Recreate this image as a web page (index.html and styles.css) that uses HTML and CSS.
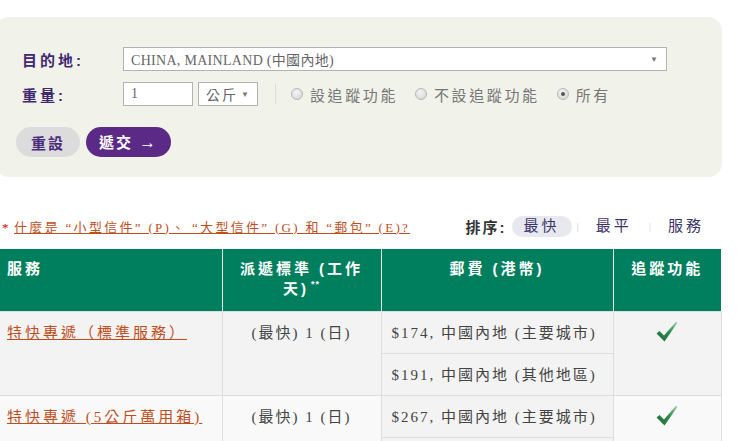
FILE: index.html
```html
<!DOCTYPE html>
<html lang="zh-Hant">
<head>
    <meta charset="UTF-8">
    <meta name="viewport" content="width=device-width, initial-scale=1.0">
    <title>郵費計算</title>
    <link rel="stylesheet" href="styles.css">
</head>
<body>
    <div class="page">
        <div class="search-panel">
            <div class="form-row">
                <label class="form-label">目的地:</label>
                <div class="select select-wide">
                    <span>CHINA, MAINLAND (中國內地)</span>
                    <span class="arrow">▼</span>
                </div>
            </div>
            <div class="form-row">
                <label class="form-label">重量:</label>
                <div class="text-input">1</div>
                <div class="select select-unit">
                    <span>公斤</span>
                    <span class="arrow">▼</span>
                </div>
                <span class="divider"></span>
                <label class="radio"><span class="radio-dot"></span>設追蹤功能</label>
                <label class="radio"><span class="radio-dot"></span>不設追蹤功能</label>
                <label class="radio"><span class="radio-dot checked"></span>所有</label>
            </div>
            <div class="form-actions">
                <button type="button" class="btn-reset">重設</button>
                <button type="button" class="btn-submit">遞交 <span class="btn-arrow">→</span></button>
            </div>
        </div>

        <div class="result-bar">
            <p class="note"><span class="star">*</span> <a href="#">什麼是 “小型信件” (P)、 “大型信件” (G) 和 “郵包” (E)?</a></p>
            <div class="sort">
                <span class="sort-label">排序:</span>
                <a href="#" class="sort-item active">最快</a>
                <span class="sort-sep">|</span>
                <a href="#" class="sort-item">最平</a>
                <span class="sort-sep">|</span>
                <a href="#" class="sort-item">服務</a>
            </div>
        </div>

        <table class="rate-table">
            <colgroup>
                <col class="col-service">
                <col class="col-days">
                <col class="col-price">
                <col class="col-track">
            </colgroup>
            <thead>
                <tr>
                    <th class="th-service">服務</th>
                    <th>派遞標準 (工作天)<sup>**</sup></th>
                    <th>郵費 (港幣)</th>
                    <th>追蹤功能</th>
                </tr>
            </thead>
            <tbody>
                <tr class="row-a">
                    <td rowspan="2" class="service"><a href="#">特快專遞（標準服務）</a></td>
                    <td rowspan="2" class="days">(最快) 1 (日)</td>
                    <td class="price">$174, 中國內地 (主要城市)</td>
                    <td rowspan="2" class="track">
                        <svg class="tick" viewBox="0 0 22 21" width="22" height="21">
                            <defs>
                                <linearGradient id="tickFill" x1="0" y1="1" x2="1" y2="0">
                                    <stop offset="0" stop-color="#1d6e3a"/>
                                    <stop offset="0.55" stop-color="#2f8a4c"/>
                                    <stop offset="1" stop-color="#a9d6b1"/>
                                </linearGradient>
                            </defs>
                            <path d="M0.5 12.5 L3.5 10 L8 14.5 L20 0.8 L21.5 1.8 L8.5 20.5 Z" fill="url(#tickFill)"/>
                        </svg>
                    </td>
                </tr>
                <tr class="row-a">
                    <td class="price">$191, 中國內地 (其他地區)</td>
                </tr>
                <tr class="row-b">
                    <td rowspan="2" class="service"><a href="#">特快專遞 (5公斤萬用箱)</a></td>
                    <td rowspan="2" class="days">(最快) 1 (日)</td>
                    <td class="price">$267, 中國內地 (主要城市)</td>
                    <td rowspan="2" class="track">
                        <svg class="tick" viewBox="0 0 22 21" width="22" height="21">
                            <path d="M0.5 12.5 L3.5 10 L8 14.5 L20 0.8 L21.5 1.8 L8.5 20.5 Z" fill="url(#tickFill)"/>
                        </svg>
                    </td>
                </tr>
                <tr class="row-b">
                    <td class="price">$284, 中國內地 (其他地區)</td>
                </tr>
            </tbody>
        </table>
    </div>
</body>
</html>
```

FILE: styles.css
```css
body {
    margin: 0;
    background: #fff;
    font-family: "Liberation Serif", "Noto Sans CJK TC", serif;
    font-size: 14px;
    color: #444;
}
a {
    color: #c04e1c;
}
.page {
    width: 722px;
}
.search-panel {
    margin: 17px 0 0 -5px;
    height: 160px;
    box-sizing: border-box;
    padding: 30px 0 0 21px;
    background: #f1f2ea;
    border-radius: 14px;
}
.form-row {
    display: flex;
    align-items: center;
    height: 24px;
    padding-left: 6px;
    margin-bottom: 11px;
}
.form-label {
    width: 101px;
    font-family: "Liberation Sans", "Noto Sans CJK TC", sans-serif;
    font-weight: bold;
    font-size: 15px;
    letter-spacing: 3px;
    color: #3f2870;
}
.select,
.text-input {
    height: 24px;
    box-sizing: border-box;
    background: #fff;
    border: 1px solid #b3b3b3;
    display: flex;
    align-items: center;
    justify-content: space-between;
    padding: 0 8px 0 7px;
    color: #666;
    font-size: 14px;
}
.select-wide {
    width: 544px;
    letter-spacing: 0.3px;
}
.text-input {
    width: 70px;
}
.select-unit {
    width: 60px;
    margin-left: 5px;
    letter-spacing: 2px;
}
.arrow {
    font-size: 8px;
    color: #777;
    letter-spacing: 0;
}
.divider {
    width: 1px;
    height: 20px;
    background: #dcdcd4;
    margin: 0 15px 0 17px;
}
.radio {
    display: flex;
    align-items: center;
    gap: 7px;
    margin-right: 17px;
    color: #777;
    font-size: 15px;
    letter-spacing: 2.6px;
}
.radio-dot {
    width: 10px;
    height: 10px;
    border-radius: 50%;
    border: 1px solid #b8b8b8;
    background: radial-gradient(circle at 40% 35%, #f4f4f4, #d2d2d2);
    display: flex;
    align-items: center;
    justify-content: center;
}
.radio-dot.checked::after {
    content: "";
    width: 4px;
    height: 4px;
    border-radius: 50%;
    background: #555;
}
.form-actions {
    display: flex;
    gap: 6px;
    margin-top: 21px;
}
.form-actions button {
    height: 30px;
    border: none;
    border-radius: 15px;
    font-family: "Liberation Sans", "Noto Sans CJK TC", sans-serif;
    font-weight: bold;
    font-size: 15px;
    letter-spacing: 2px;
    cursor: pointer;
}
.btn-reset {
    width: 64px;
    background: #dcdcdc;
    color: #4a2c7c;
}
.btn-submit {
    width: 85px;
    background: #5a2a86;
    color: #fff;
}
.btn-arrow {
    font-size: 17px;
    font-weight: normal;
}
.result-bar {
    display: flex;
    justify-content: space-between;
    align-items: center;
    height: 22px;
    margin-top: 38px;
    padding-right: 6px;
}
.note {
    margin: 0;
    font-size: 13px;
    letter-spacing: 2.3px;
}
.star {
    color: #d40000;
    margin-left: 2px;
    letter-spacing: 0;
}
.sort {
    display: flex;
    align-items: center;
}
.sort-label {
    font-family: "Liberation Sans", "Noto Sans CJK TC", sans-serif;
    font-weight: bold;
    font-size: 15px;
    color: #333;
    letter-spacing: 2px;
    margin-right: 5px;
}
.sort-item {
    padding: 0 12px;
    height: 21px;
    line-height: 21px;
    border-radius: 11px;
    color: #3b3468;
    text-decoration: none;
    font-size: 15px;
    letter-spacing: 3px;
}
.sort-item.active {
    background: #e8e8f0;
}
.sort-sep {
    color: #d0d0d0;
    font-size: 11px;
    margin: 0 5px;
}
.rate-table {
    margin-top: 12px;
    width: 721px;
    border-collapse: collapse;
    table-layout: fixed;
}
.col-service {
    width: 222px;
}
.col-days {
    width: 159px;
}
.col-price {
    width: 232px;
}
.col-track {
    width: 108px;
}
.rate-table th {
    background: #007f5e;
    color: #fff;
    font-family: "Liberation Sans", "Noto Sans CJK TC", sans-serif;
    font-weight: bold;
    font-size: 15px;
    letter-spacing: 3px;
    line-height: 20px;
    vertical-align: top;
    padding: 10px 10px 12px;
    border-left: 1px solid #e6efe9;
    text-align: center;
}
.rate-table th:first-child {
    border-left: none;
}
.rate-table .th-service {
    text-align: left;
    padding-left: 7px;
}
.rate-table th sup {
    font-size: 9px;
    letter-spacing: 1px;
    margin-left: 2px;
    vertical-align: 7px;
    line-height: 0;
}
.rate-table td {
    padding: 11px 7px 10px;
    line-height: 20px;
    vertical-align: top;
    border: 1px solid #dedede;
    font-size: 15px;
    letter-spacing: 3px;
    color: #444;
}
.rate-table td:first-child {
    border-left: none;
}
.row-a td {
    background: #f3f3f3;
}
.row-b td {
    background: #f9f9f9;
}
.rate-table td.days {
    text-align: center;
    letter-spacing: 2px;
}
.rate-table td.price {
    padding-left: 10px;
    letter-spacing: 2px;
    background: #f3f3f3;
}
.rate-table td.track {
    text-align: center;
    padding-top: 9px;
}
.tick {
    display: block;
    margin: 0 auto;
}
```
